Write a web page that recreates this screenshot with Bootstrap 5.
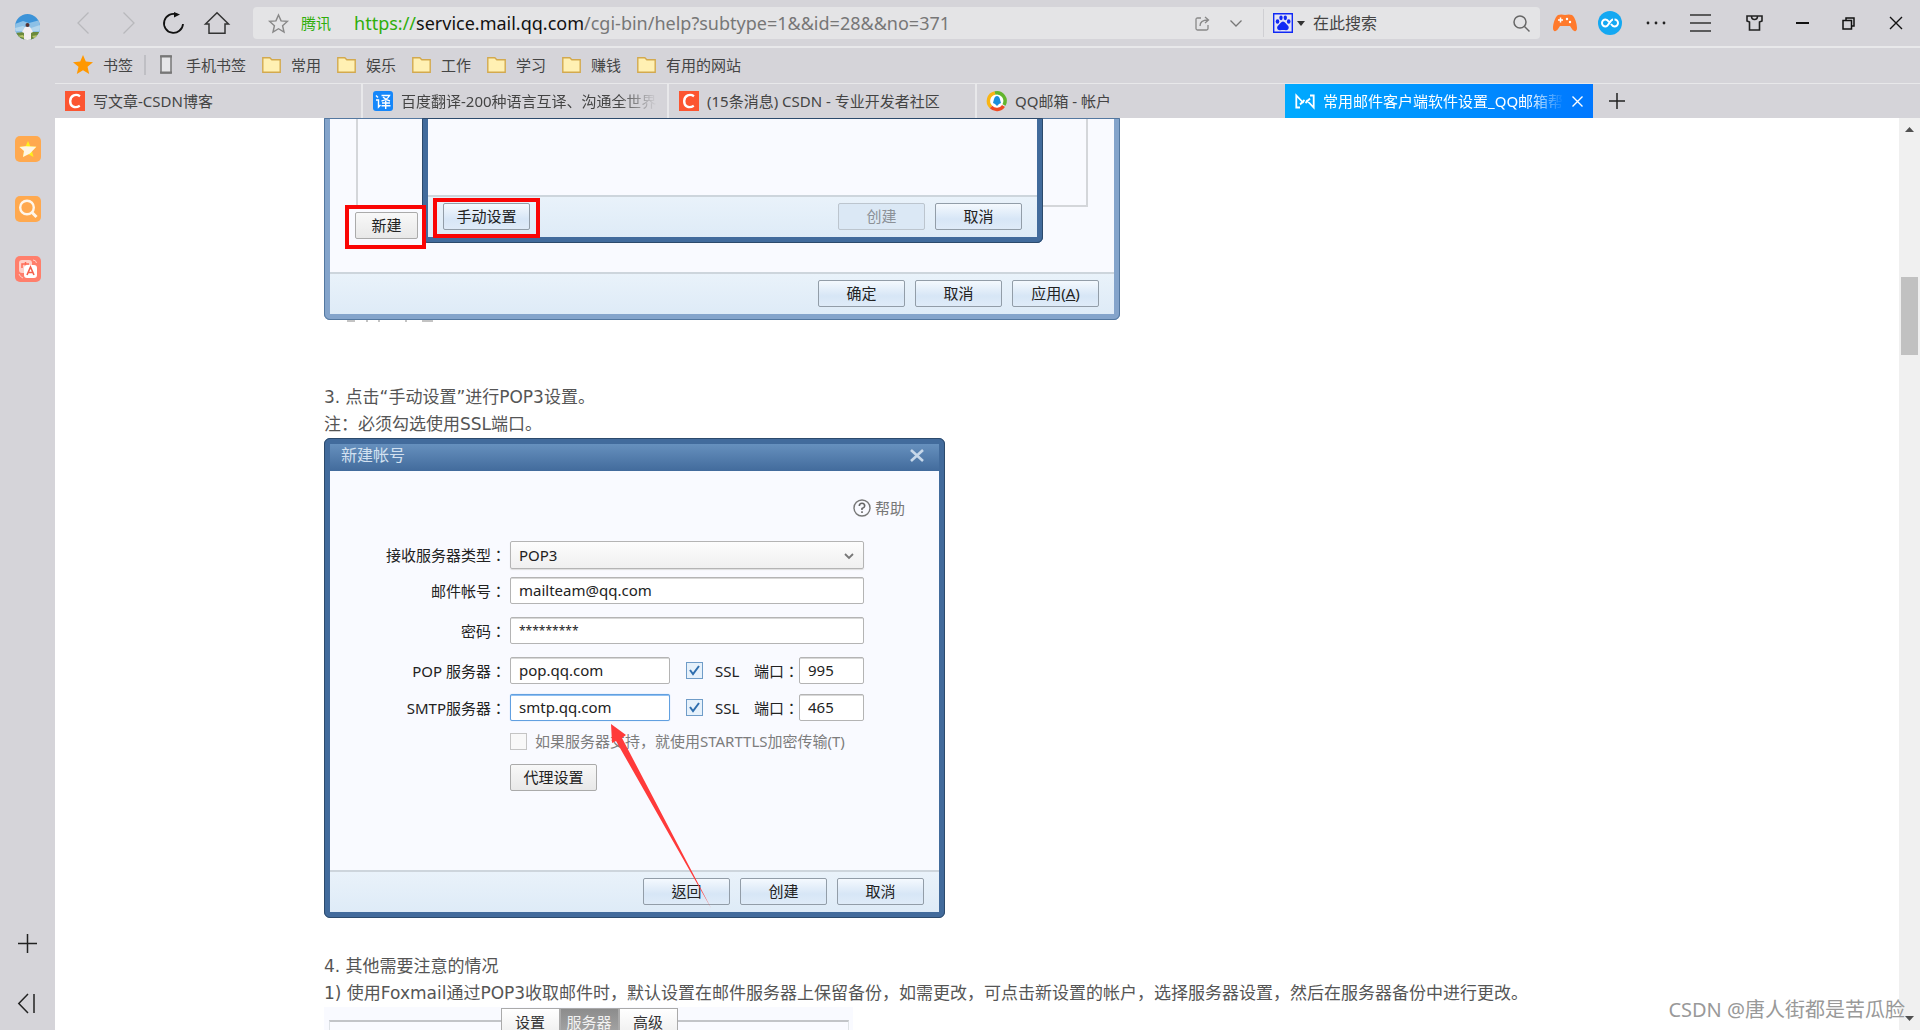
<!DOCTYPE html>
<html lang="zh-CN">
<head>
<meta charset="utf-8">
<meta name="viewport" content="width=device-width, initial-scale=1">
<title>常用邮件客户端软件设置_QQ邮箱帮助中心</title>
<link href="https://cdn.jsdelivr.net/npm/bootstrap@5.3.0/dist/css/bootstrap.min.css" rel="stylesheet">
<style>
  body { font-family: "Noto Sans", "Noto Sans CJK SC", sans-serif; font-size: 15px; line-height: 20px; color: #444; background: #fff; }
  svg { display: block; flex: none; overflow: visible; }
  button, input, select { font: inherit; color: inherit; }
  .plain { border: 0; padding: 0; background: none; }
  .chrome-bg { background: #d5d4d9; }
  .main-col { min-width: 0; }

  /* side bar */
  .side { width: 55px; padding: 14px 0 17px; }
  .side-apps { margin-top: 96px; gap: 34px; }
  .side-end { gap: 41px; }

  /* address row */
  .addr-row { height: 48px; border-bottom: 2px solid #e8e8ea; padding: 0 18px 0 22px; color: #222; }
  .navs { width: 176px; }
  .nav-fwd { margin-left: 34px; }
  .nav-load { margin-left: 28px; }
  .nav-home { margin-left: 21px; }
  .omni { height: 32px; border-radius: 4px; background: #e4e4e6; padding: 0 10px 0 16px; }
  .omni input { border: 0; background: none; outline: 0; padding: 0; }
  .site { color: #2fae0a; margin: 0 23px 0 13px; }
  .url { font-size: 18px; line-height: 24px; color: #777; text-decoration: none; }
  .url .scheme { color: #2fae0a; }
  .url .host { color: #111; }
  .url-more { margin-left: 20px; }
  .omni-sep { width: 1px; height: 28px; background: #cfcfd3; margin: 0 9px 0 21px; }
  .hunt { width: 184px; font-size: 16px; }
  .hunt::placeholder { color: #444; opacity: 1; }
  .tools { margin-left: 13px; gap: 24px; }
  .tools .near { margin-left: -3px; }
  .tools .wide { margin-left: 9px; }
  .tools .wider { margin-left: 11px; }

  /* bookmarks */
  .marks { height: 36px; border-bottom: 1px solid #e8e8ea; padding: 0 18px 2px; gap: 16px; }
  .marks a { gap: 10px; color: #444; text-decoration: none; }
  .marks .phone { gap: 14px; padding-left: 14px; border-left: 2px solid #bfbfc4; line-height: 20px; margin-left: -5px; }

  /* tabs */
  .tabs { height: 34px; }
  .tab { flex: 0 1 308px; min-width: 0; padding: 0 10px; gap: 8px; border-right: 2px solid #e8e8ea; color: #444; text-decoration: none; }
  .tab.blank-end { border-right: 0; }
  .tab.plain-end { flex-basis: 306px; }
  .tab.on { color: #fff; background: linear-gradient(90deg, #00aaff, #0078ff); }
  .tab-name { overflow: hidden; white-space: nowrap; flex: 1 1 0; }
  .fade-end { -webkit-mask-image: linear-gradient(90deg, #000 85%, transparent); mask-image: linear-gradient(90deg, #000 85%, transparent); }

  /* page */
  .view { min-height: 0; }
  .doc { padding-left: 269px; overflow: hidden; font-family: "DejaVu Sans", "Noto Sans CJK SC", sans-serif; font-size: 17px; line-height: 27px; color: #555; }
  .doc p { margin: 0; white-space: nowrap; }
  .bar-v { width: 21px; background: #f0f0f0; padding: 9px 0; }
  .bar-v .thumb { width: 17px; height: 78px; margin-top: 145px; background: #c1c1c1; }

  /* mail client windows */
  .win { font-family: "Noto Sans", "Noto Sans CJK TC", sans-serif; font-size: 15px; line-height: 20px; color: #222; background: #f9faff; border: 6px solid #426b9c; outline: 1px solid #2c4a6c; outline-offset: -1px; border-radius: 6px; }
  .win-pale { border-color: #84a4cb; outline-color: #5478a0; }
  .win-open { border-top: 0; border-top-left-radius: 0; border-top-right-radius: 0; }
  .foot { height: 42px; padding: 0 15px 2px; gap: 10px; border-top: 2px solid #cdd5dc; background: linear-gradient(#e9f2fa, #deebf7); }
  .wbtn { width: 87px; height: 27px; padding: 0 0 1px; border: 1px solid #929da8; border-radius: 2px; background: linear-gradient(#f4f9fe, #d7e6f6 60%, #dfebf8); color: #222; line-height: 20px; }
  .wbtn:disabled { border-color: #bcc5ce; background: #dbe8f5; color: #8b9097; }
  .wbtn-grey { border-color: #aaa; background: linear-gradient(#f8f8f8, #e8e8e8); }
  .first { width: 796px; height: 202px; }
  .list-edge { height: 89px; margin: 0 26px; border: 2px solid #d4d6da; border-top: 0; }
  .inner { left: 92px; top: 0; width: 621px; height: 125px; }
  .new-btn { left: 25px; top: 94px; width: 63px; }
  .frame-red { border: 4px solid #fa0505; pointer-events: none; }
  .frame-a { left: 15px; top: 87px; width: 81px; height: 44px; }
  .frame-b { left: 103px; top: 80px; width: 107px; height: 40px; }
  .doc .step { margin-top: 62px; }
  .doc .after { margin-top: 35px; }

  .account { width: 621px; height: 480px; overflow: hidden; }
  .title-bar { height: 33px; margin: -6px -6px 0; padding: 0 21px 0 17px; font-size: 16px; color: #d3e1f0; background: linear-gradient(#6d97c4, #426b9c); border-top: 1px solid #2c4a6c; }
  .help { margin: 27px 34px 0 0; color: #777; gap: 4px; text-decoration: none; }
  .form-rows { margin: 23px 75px 0 0; }
  .line { display: grid; grid-template-columns: 176px 1fr; column-gap: 4px; align-items: center; margin-top: 13px; }
  .line > label { text-align: right; }
  .line-first { margin-top: 0; }
  .line-near { margin-top: 8px; }
  .line-mid { margin-top: 10px; }
  .box { height: 27px; border: 1px solid #b4b4b4; border-radius: 2px; background: #fff; padding: 0 8px 1px; min-width: 0; width: 100%; box-shadow: inset 0 1px 0 #d8d8d8; outline: 0; }
  select.box { display: block; appearance: none; height: 28px; background: linear-gradient(#fdfdfd, #f0f0f0); box-shadow: 0 1px 1px #ddd; }
  .pick svg { right: 10px; top: 12px; pointer-events: none; }
  .box.active { border-color: #62a0e0; box-shadow: inset 0 1px 0 #8fc0f2, 0 0 1px #8fc0f2; }
  .host-box { width: 160px; }
  .port-box { width: 65px; }
  .stars { font-size: 12px; }
  .tick { appearance: none; width: 17px; height: 17px; margin: 0; border: 1px solid #6f9cc8; background: #e6f1fb; flex: none; }
  .tick:checked { background: #e6f1fb url("data:image/svg+xml,%3Csvg xmlns='http://www.w3.org/2000/svg' viewBox='0 0 15 15'%3E%3Cpath d='M3 7l3 4 6-8' fill='none' stroke='%232f6eae' stroke-width='2'/%3E%3C/svg%3E"); }
  .tick:disabled { border-color: #c4c4c4; background: #f8f8f8; }
  .dim { color: #7d7d7d; }
  .arrow { left: 281px; top: 280px; }

  .strip { width: 529px; height: 40px; padding: 1px 4px 0 5px; background: #f9faff; color: #333; font-family: "Noto Sans", "Noto Sans CJK SC", sans-serif; font-size: 15px; line-height: 20px; }
  .strip-line { flex: 1; height: 30px; margin-top: 12px; border-top: 2px solid #c2c4c8; }
  .strip button { width: 59px; height: 32px; border: 1px solid #aaa; background: linear-gradient(#fff, #ececec); padding: 0 0 4px; }
  .strip button.sel { background: linear-gradient(#8c8c8c, #aaa); color: #f2f2f2; }
  .sign { right: 15px; bottom: 6px; font-size: 20px; line-height: 28px; color: #999; pointer-events: none; }
</style>
<script src="https://cdn.jsdelivr.net/npm/bootstrap@5.3.0/dist/js/bootstrap.bundle.min.js"></script>
</head>
<body>
<svg width="0" height="0" class="position-absolute" aria-hidden="true">
  <symbol id="folder" viewBox="0 0 19 16"><path d="M.8 15.2V.8h7l2 2h8.400v12.400z" fill="#fff0b3" stroke="#d3a94e" stroke-width="1.400"/></symbol>
  <symbol id="csdn" viewBox="0 0 20 20"><path d="M0 0h20v20H0z" fill="#fc5531"/><path d="M15 5.200C11 2.600 5.500 4 5.200 10c-.2 6 5 7.500 9.600 4.800" fill="none" stroke="#fff" stroke-width="2.400"/></symbol>
</svg>
<div class="d-flex vh-100 overflow-hidden position-relative">
  <nav class="side chrome-bg d-flex flex-column align-items-center flex-shrink-0">
    <button class="plain" aria-label="用户">
      <svg width="25" height="26" viewBox="0 0 25 26"><clipPath id="av"><ellipse cx="12.500" cy="13" rx="12.500" ry="13"/></clipPath><g clip-path="url(#av)"><path fill="#3c93d8" d="M0 0h25v26H0z"/><path fill="#8cc0e6" d="M0 10l8-3 6 2 11-3v13H0z"/><path fill="#b5d6ec" d="M0 14l8-2 5 3 12-4v6H0z"/><path fill="#6d8a3c" d="M0 19l9-1h16v9H0z"/><path fill="#b9c66a" d="M2 22l6-1 2 3zM17 22l6-1-3 4z"/><path fill="#f3eef0" d="M10 13h5l3 5-2 1v7H9v-7l-2-1z"/><circle cx="12.500" cy="11" r="2" fill="#533"/></g></svg>
    </button>
    <div class="side-apps d-flex flex-column">
      <button class="plain" aria-label="收藏"><svg width="26" height="26" viewBox="0 0 26 26"><rect width="26" height="26" rx="5" fill="#ffa94f"/><path d="M13 5l2.400 5.200 6 .6-4.500 4.200L18.500 21 13 18l-5 3 1-6-4.600-4.200 6.200-.6z" fill="#ffee1c"/><path d="M10.500 10.200L4.500 11 9 15l-1 6 7-3.500 6.300-6.700z" fill="#fff5e4"/></svg></button>
      <button class="plain" aria-label="搜索"><svg width="26" height="26" viewBox="0 0 26 26"><rect width="26" height="26" rx="5" fill="#ffa94f"/><g fill="none" stroke="#fff6ea" stroke-width="2.400"><circle cx="12" cy="11.500" r="6.800"/><path d="M17 16.500l4.500 4.500" stroke-width="3"/></g></svg></button>
      <button class="plain" aria-label="翻译"><svg width="26" height="26" viewBox="0 0 26 26"><rect width="26" height="26" rx="5" fill="#ff7f6c"/><rect x="4" y="4" width="13" height="13" rx="3" fill="#ffd0c8"/><path d="M7 12V8h7M10.500 6v8" stroke="#ff6b55" stroke-width="1.500" fill="none"/><rect x="9" y="9" width="13" height="13" rx="3" fill="#fff"/><path d="M12 19l3.500-8 3.500 8M13.200 16.500h4.600" stroke="#f4604c" stroke-width="1.600" fill="none"/><path d="M18 4q3 0 3.500 3M4 18q1 3 4 4" stroke="#ffd0c8" fill="none"/></svg></button>
    </div>
    <div class="side-end d-flex flex-column mt-auto">
      <button class="plain" aria-label="添加"><svg width="19" height="19" viewBox="0 0 19 19"><path d="M9.500 0v19M0 9.500h19" stroke="#222" stroke-width="1.500"/></svg></button>
      <button class="plain" aria-label="收起"><svg width="19" height="19" viewBox="0 0 19 19"><path d="M10 0L.8 9.500 10 19M16 0v19" fill="none" stroke="#222" stroke-width="1.500"/></svg></button>
    </div>
  </nav>

  <div class="main-col d-flex flex-column flex-grow-1">
    <header class="chrome-bg flex-shrink-0">
      <div class="addr-row d-flex align-items-center">
        <div class="navs d-flex align-items-center">
          <button class="plain" aria-label="后退"><svg width="12" height="22" viewBox="0 0 12 22"><path d="M11.500.5L1 11l10.500 10.500" fill="none" stroke="#b8b8bc" stroke-width="1.300"/></svg></button>
          <button class="plain nav-fwd" aria-label="前进"><svg width="12" height="22" viewBox="0 0 12 22"><path d="M.5.5L11 11 .5 21.500" fill="none" stroke="#b8b8bc" stroke-width="1.300"/></svg></button>
          <button class="plain nav-load" aria-label="刷新"><svg width="21" height="22" viewBox="0 0 21 22"><path d="M14 2.500A9.500 9.500 0 1 0 20 12" fill="none" stroke="#111" stroke-width="1.800"/><path d="M11 0l6 2.500-6 3z" fill="#111"/></svg></button>
          <button class="plain nav-home" aria-label="主页"><svg width="24" height="22" viewBox="0 0 24 22"><path d="M.5 12L12 .8 23.500 12H20v9.200H4V12z" fill="none" stroke="#333" stroke-width="1.500"/></svg></button>
        </div>
        <div class="omni d-flex align-items-center flex-grow-1">
          <button class="plain" aria-label="加入收藏"><svg width="19" height="19" viewBox="0 0 20 20"><path d="M10 1l2.700 6.200 6.600.6-5 4.500 1.500 6.700-5.800-3.500L4.200 19l1.500-6.700-5-4.500 6.600-.6z" fill="none" stroke="#888" stroke-width="1.500"/></svg></button>
          <span class="site">腾讯</span>
          <a class="url" href="#"><span class="scheme">https://</span><span class="host">service.mail.qq.com</span>/cgi-bin/help?subtype=1&amp;&amp;id=28&amp;&amp;no=371</a>
          <button class="plain ms-auto" aria-label="分享"><svg width="15" height="15" viewBox="0 0 15 15"><path d="M6 2H2.500Q1 2 1 3.500v9Q1 14 2.500 14h9q1.500 0 1.500-1.500V9M5 10q0-6 8-6M10 1l3.500 3L10 7" fill="none" stroke="#888" stroke-width="1.300"/></svg></button>
          <button class="plain url-more" aria-label="更多地址"><svg width="12" height="7" viewBox="0 0 12 7"><path d="M.5.5L6 6 11.500.5" fill="none" stroke="#777" stroke-width="1.300"/></svg></button>
          <span class="omni-sep"></span>
          <button class="plain d-flex align-items-center gap-1 me-2" aria-label="搜索引擎"><svg width="20" height="20" viewBox="0 0 20 20"><path d="M.7.7h18.600v18.600H.7z" fill="#e4e4f4" stroke="#1029f5" stroke-width="1.400"/><g fill="#1029f5"><ellipse cx="4.500" cy="8.500" rx="1.800" ry="2.300"/><ellipse cx="8" cy="4.800" rx="1.700" ry="2.400"/><ellipse cx="12.300" cy="4.800" rx="1.700" ry="2.400"/><ellipse cx="15.700" cy="8.500" rx="1.800" ry="2.300"/><path d="M10 8.500c2 0 3 2.500 4.800 4 2 2 .5 5-1.800 4.700-2-.3-4-.3-6 0-2.500.3-4-2.700-1.800-4.700C7 11 8 8.500 10 8.500z"/></g></svg><svg width="8" height="5" viewBox="0 0 8 5"><path d="M0 0h8L4 5z" fill="#333"/></svg></button>
          <input class="hunt" type="text" placeholder="在此搜索" aria-label="在此搜索">
          <button class="plain ms-3" aria-label="搜索"><svg width="17" height="17" viewBox="0 0 17 17"><circle cx="7" cy="7" r="6" fill="none" stroke="#666" stroke-width="1.500"/><path d="M11.500 11.500l5 5" stroke="#666" stroke-width="1.500"/></svg></button>
        </div>
        <div class="tools d-flex align-items-center">
          <button class="plain" aria-label="游戏"><svg width="24" height="18" viewBox="0 0 24 18"><path d="M5 1q3-1 7 0 4-1 7 0c3 2 5 9 5 13 0 4-3 4-5 1l-2-3H7l-2 3c-2 3-5 3-5-1C0 10 2 3 5 1z" fill="#ff7a2c"/><path d="M5 6h5M7.500 3.500v5" stroke="#fff" stroke-width="1.500"/><circle cx="14" cy="5" r="1.200" fill="#fff"/><circle cx="17" cy="8" r="1.200" fill="#fff"/></svg></button>
          <button class="plain near" aria-label="同步"><svg width="24" height="24" viewBox="0 0 24 24"><circle cx="12" cy="12" r="12" fill="#14a8f2"/><path d="M15 8.500c-3 0-4 7-7.500 7a3.500 3.500 0 1 1 0-7c1.500 0 2.500 1 3.500 2.500M13 13c1 1.500 2 2.500 3.500 2.500a3.500 3.500 0 1 0 0-7" fill="none" stroke="#fff" stroke-width="2"/></svg></button>
          <button class="plain" aria-label="更多"><svg width="20" height="4" viewBox="0 0 20 4"><g fill="#222"><circle cx="2" cy="2" r="1.400"/><circle cx="10" cy="2" r="1.400"/><circle cx="18" cy="2" r="1.400"/></g></svg></button>
          <button class="plain" aria-label="菜单"><svg width="21" height="18" viewBox="0 0 21 18"><path d="M0 1h21M0 9h21M0 17h21" stroke="#333" stroke-width="1.400"/></svg></button>
          <button class="plain wider" aria-label="皮肤"><svg width="17" height="16" viewBox="0 0 17 16"><path d="M1 1h15v5l-2.500 1v8h-10V7L1 6zM5.500 1q0 3.500 3 3.500t3-3.500" fill="none" stroke="#222" stroke-width="1.600"/></svg></button>
          <button class="plain wide" aria-label="最小化"><svg width="13" height="2" viewBox="0 0 13 2"><path d="M0 1h13" stroke="#111" stroke-width="2"/></svg></button>
          <button class="plain wide" aria-label="还原"><svg width="13" height="13" viewBox="0 0 13 13"><path d="M1 3.500h8.500V12H1zM4 3.500V1h8v8H9.500" fill="none" stroke="#111" stroke-width="1.500"/></svg></button>
          <button class="plain wider" aria-label="关闭"><svg width="12" height="12" viewBox="0 0 12 12"><path d="M0 0l12 12M12 0L0 12" stroke="#111" stroke-width="1.400"/></svg></button>
        </div>
      </div>

      <div class="marks d-flex align-items-center">
        <a class="d-flex align-items-center" href="#"><svg width="20" height="19" viewBox="0 0 20 19"><path d="M10 0l2.800 6.500 7.200.7-5.500 4.600 1.700 7.200-6.200-3.800L3.800 19l1.700-7.200L0 7.200l7.200-.7z" fill="#ff9800"/></svg>书签</a>
        <a class="phone d-flex align-items-center" href="#"><svg width="12" height="19" viewBox="0 0 12 19"><path d="M1 1h10v17H1z" fill="#e6e6e8" stroke="#777" stroke-width="1.500"/><path d="M0 1.500h12M0 17.500h12" stroke="#777" stroke-width="2"/></svg>手机书签</a>
        <a class="d-flex align-items-center" href="#"><svg width="19" height="16"><use href="#folder"/></svg>常用</a>
        <a class="d-flex align-items-center" href="#"><svg width="19" height="16"><use href="#folder"/></svg>娱乐</a>
        <a class="d-flex align-items-center" href="#"><svg width="19" height="16"><use href="#folder"/></svg>工作</a>
        <a class="d-flex align-items-center" href="#"><svg width="19" height="16"><use href="#folder"/></svg>学习</a>
        <a class="d-flex align-items-center" href="#"><svg width="19" height="16"><use href="#folder"/></svg>赚钱</a>
        <a class="d-flex align-items-center" href="#"><svg width="19" height="16"><use href="#folder"/></svg>有用的网站</a>
      </div>

      <div class="tabs d-flex">
        <a class="tab d-flex align-items-center" href="#"><svg width="20" height="20"><use href="#csdn"/></svg><span class="tab-name">写文章-CSDN博客</span></a>
        <a class="tab plain-end d-flex align-items-center" href="#"><svg width="20" height="20" viewBox="0 0 20 20"><rect width="20" height="20" rx="3" fill="#1687fa"/><path d="M3 4.500l2 2M3 9h2.500v7l2-2M8.500 4.500h8Q14 9 8.500 10M10 6q3 3 7 4M12.700 9.500V18M9 12h8M8.500 14.700h9" fill="none" stroke="#fff" stroke-width="1.400"/></svg><span class="tab-name fade-end">百度翻译-200种语言互译、沟通全世界</span></a>
        <a class="tab d-flex align-items-center" href="#"><svg width="20" height="20"><use href="#csdn"/></svg><span class="tab-name">(15条消息) CSDN - 专业开发者社区</span></a>
        <a class="tab blank-end d-flex align-items-center" href="#"><svg width="20" height="20" viewBox="0 0 20 20"><circle cx="10" cy="10" r="8.200" fill="#fff"/><g fill="none" stroke-width="3.500"><path d="M4 16A8.200 8.200 0 0 1 8 2" stroke="#f9b515"/><path d="M8 2a8.200 8.200 0 0 1 9 12" stroke="#62b52d"/><path d="M16.500 15A8.200 8.200 0 0 1 4 16" stroke="#f04a23"/></g><path d="M10 5c3 0 3 4 4 7l-2 1-2 2-2-2-2-1c1-3 1-7 4-7z" fill="#1b8fdc"/></svg><span class="tab-name">QQ邮箱 - 帐户</span></a>
        <a class="tab on blank-end d-flex align-items-center" href="#"><svg width="20" height="15" viewBox="0 0 20 15"><path d="M5 13.500H1.300V1.500l7.200 7.500M9.500 6L5 10.500M15 1.500h3.700v12L11.500 6M10.500 9L15 4.500" fill="none" stroke="#fff" stroke-width="1.800"/></svg><span class="tab-name fade-end">常用邮件客户端软件设置_QQ邮箱帮</span><svg width="11" height="11" viewBox="0 0 11 11"><path d="M.5.5l10 10M10.500.5l-10 10" stroke="#fff" stroke-width="1.400"/></svg></a>
        <button class="plain px-3" aria-label="新建标签页"><svg width="16" height="16" viewBox="0 0 16 16"><path d="M8 0v16M0 8h16" stroke="#222" stroke-width="1.500"/></svg></button>
      </div>
    </header>

    <div class="view d-flex flex-grow-1">
      <main class="doc flex-grow-1">
        <section class="win win-pale win-open first position-relative d-flex flex-column">
          <div class="list-edge"></div>
          <div class="foot d-flex align-items-center justify-content-end mt-auto">
            <button class="wbtn">确定</button><button class="wbtn">取消</button><button class="wbtn">应用(<u>A</u>)</button>
          </div>
          <div class="win win-open inner position-absolute d-flex flex-column">
            <div class="foot d-flex align-items-center mt-auto">
              <button class="wbtn me-auto">手动设置</button><button class="wbtn" disabled>创建</button><button class="wbtn">取消</button>
            </div>
          </div>
          <button class="wbtn wbtn-grey new-btn position-absolute">新建</button>
          <span class="frame-red frame-a position-absolute"></span>
          <span class="frame-red frame-b position-absolute"></span>
        </section>
        <svg width="120" height="2" viewBox="0 0 120 2" aria-hidden="true"><path d="M23 1h8M42 1h2M54 1h2M81 1h2M98 1h11" stroke="#888" stroke-width="1"/></svg>

        <p class="step">3. 点击“手动设置”进行POP3设置。</p>
        <p>注：必须勾选使用SSL端口。</p>
        <form class="win account position-relative d-flex flex-column" lang="zh-TW">
          <div class="title-bar d-flex align-items-center justify-content-between"><span>新建帐号</span><button type="button" class="plain" aria-label="关闭"><svg width="14" height="13" viewBox="0 0 14 13"><path d="M1 1l12 11M13 1L1 12" stroke="#c7d8ea" stroke-width="2.600"/></svg></button></div>
          <a class="help d-flex align-items-center align-self-end" href="#"><svg width="18" height="18" viewBox="0 0 18 18"><circle cx="9" cy="9" r="8" fill="none" stroke="#777" stroke-width="1.400"/><path d="M6.300 7q0-2.700 2.700-2.700T11.700 7Q11.700 8.500 9 9.500V11M9 12.300v1.700" fill="none" stroke="#666" stroke-width="1.600"/></svg>帮助</a>
          <div class="form-rows">
            <div class="line line-first"><label for="kind">接收服务器类型：</label><div class="pick position-relative"><select id="kind" class="box"><option>POP3</option></select><svg class="position-absolute" width="10" height="7" viewBox="0 0 10 7"><path d="M1 1l4 4 4-4" fill="none" stroke="#777" stroke-width="1.800"/></svg></div></div>
            <div class="line line-near"><label for="mail">邮件帐号：</label><input id="mail" class="box" type="text" value="mailteam@qq.com"></div>
            <div class="line"><label for="pass">密码：</label><input id="pass" class="box stars" type="text" value="*********"></div>
            <div class="line"><label for="pop">POP 服务器：</label>
              <div class="d-flex align-items-center"><input id="pop" class="box host-box" type="text" value="pop.qq.com"><input id="ssl1" class="tick ms-3" type="checkbox" checked><label for="ssl1" class="ms-2 ps-1">SSL</label><label for="port1" class="ms-auto">端口：</label><input id="port1" class="box port-box" type="text" value="995"></div></div>
            <div class="line line-mid"><label for="smtp">SMTP服务器：</label>
              <div class="d-flex align-items-center"><input id="smtp" class="box active host-box" type="text" value="smtp.qq.com"><input id="ssl2" class="tick ms-3" type="checkbox" checked><label for="ssl2" class="ms-2 ps-1">SSL</label><label for="port2" class="ms-auto">端口：</label><input id="port2" class="box port-box" type="text" value="465"></div></div>
            <div class="line line-mid"><span></span><div class="d-flex align-items-center gap-2 text-nowrap"><input id="tls" class="tick" type="checkbox" disabled><label for="tls" class="dim" lang="zh-CN">如果服务器支持，就使用STARTTLS加密传输(T)</label></div></div>
            <div class="line"><span></span><div class="d-flex"><button type="button" class="wbtn wbtn-grey">代理设置</button></div></div>
          </div>
          <div class="foot d-flex align-items-center justify-content-end mt-auto">
            <button type="button" class="wbtn">返回</button><button type="button" class="wbtn">创建</button><button type="button" class="wbtn">取消</button>
          </div>
          <svg class="arrow position-absolute" width="100" height="184" viewBox="0 0 100 184" pointer-events="none"><path d="M0 0l15 11-4 3 89 170L5 17l-4 2z" fill="#ff3a3a"/></svg>
        </form>
        <p class="after">4. 其他需要注意的情况</p>
        <p>1) 使用Foxmail通过POP3收取邮件时，默认设置在邮件服务器上保留备份，如需更改，可点击新设置的帐户，选择服务器设置，然后在服务器备份中进行更改。</p>
        <div class="strip d-flex"><span class="strip-line border-start"></span><button>设置</button><button class="sel">服务器</button><button>高级</button><span class="strip-line border-end"></span></div>
      </main>
      <div class="bar-v d-flex flex-column align-items-center flex-shrink-0" aria-hidden="true">
        <svg width="9" height="5" viewBox="0 0 9 5"><path d="M0 5h9L4.500 0z" fill="#505050"/></svg>
        <div class="thumb"></div>
        <svg class="mt-auto" width="9" height="5" viewBox="0 0 9 5"><path d="M0 0h9L4.500 5z" fill="#505050"/></svg>
      </div>
    </div>
  </div>
  <div class="sign position-absolute">CSDN @唐人街都是苦瓜脸</div>
</div>
</body>
</html>
